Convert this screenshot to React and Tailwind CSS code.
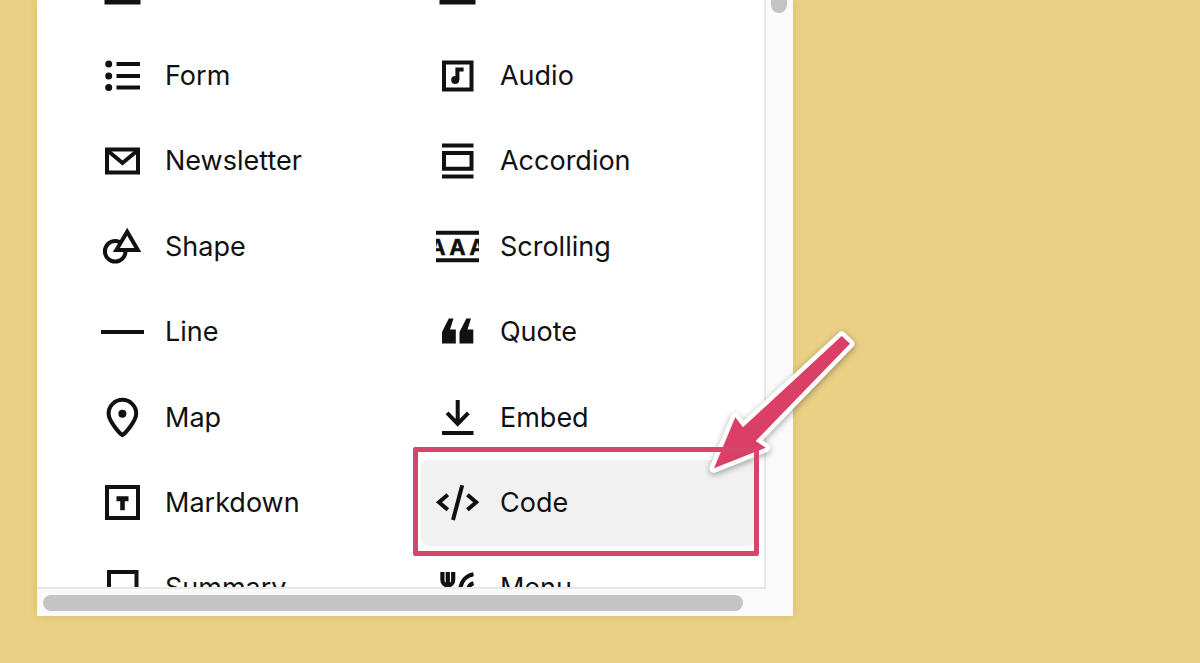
import clsx from "clsx";

const ICONS = {
  button: <path d="M7 10h31v23H7z" strokeWidth="5" />,
  video: <path d="M7 10h31v23H7z" strokeWidth="5" />,
  form: (
    <>
      <g fill="currentColor" stroke="none">
        <circle cx="8.7" cy="10" r="3.5" />
        <circle cx="8.7" cy="22" r="3.5" />
        <circle cx="8.7" cy="33.6" r="3.5" />
      </g>
      <path d="M16.5 10H40M16.5 22H40M16.5 33.6H40" />
    </>
  ),
  audio: (
    <>
      <path d="M9 8.5h27.5v27H9z" />
      <circle cx="20.2" cy="26" r="4" fill="currentColor" stroke="none" />
      <path d="M22.4 26V15.6h6.2" strokeWidth="4" />
    </>
  ),
  newsletter: (
    <>
      <path d="M7 10.5h31v23H7z" />
      <path d="M7.5 11.5L22.5 24L37.5 11.5" strokeWidth="4" />
    </>
  ),
  accordion: <path d="M7 6.5h31.5M7 37.5h31.5M9 14h27.5v15.8H9z" />,
  shape: (
    <>
      <circle cx="15.2" cy="26.3" r="10.3" />
      <path d="M27.2 6.8L37.8 25H16.4z" fill="white" />
    </>
  ),
  scrolling: (
    <>
      <path d="M1 7.7h43M1 35.2h43" />
      <svg x="1" y="10" width="43" height="22" viewBox="1 10 43 22">
        <g
          className="font-['Inter'] text-[22px] font-bold"
          fill="currentColor"
          stroke="currentColor"
          strokeWidth="0.4"
          textAnchor="middle"
        >
          <text x="2.5" y="29.5">A</text>
          <text x="22.5" y="29.5">A</text>
          <text x="42.5" y="29.5">A</text>
        </g>
      </svg>
    </>
  ),
  line: <path d="M1 22h43" />,
  quote: (
    <path
      d="M7 33.5V22L13.8 8.5H18.5L15 19.5H20.8V33.5zM24.5 33.5V22L31.3 8.5H36L32.5 19.5H38.3V33.5z"
      fill="currentColor"
      stroke="none"
    />
  ),
  map: (
    <>
      <path
        d="M22.4 39.2C20 37.5 8.6 25.5 8.6 17.6a13.8 13.8 0 0 1 27.6 0C36.2 25.5 24.8 37.5 22.4 39.2z"
        strokeLinejoin="round"
      />
      <circle cx="22.4" cy="17.8" r="4" fill="currentColor" stroke="none" />
    </>
  ),
  embed: <path d="M22.7 4v24M12.1 16.8L22.7 27.8L33.3 16.8M7 37h31.5" />,
  markdown: (
    <>
      <path d="M7 6h31v31H7z" />
      <path
        d="M16.5 15.2H28.5V20.2H24.8V29.2H20.2V20.2H16.5z"
        fill="currentColor"
        stroke="none"
      />
    </>
  ),
  code: <path d="M12.8 13.8L4 21.3L12.8 28.8M32.4 13.8L41.2 21.3L32.4 28.8M18 39L27.2 4.3" />,
  summary: <path d="M9 6h27.5v31H9z" />,
  menu: (
    <g strokeWidth="4.2">
      <path d="M7.4 6v8a5.4 5.4 0 0 0 10.8 0V6M12.8 6v30" />
      <path d="M25 24C26 15.5 31 9.5 38.5 8.2M32.6 24C33.5 20.5 35.5 18 38.5 17.2" />
    </g>
  ),
};

const BLOCKS = [
  ["button", "Button"],
  ["video", "Video"],
  ["form", "Form"],
  ["audio", "Audio"],
  ["newsletter", "Newsletter"],
  ["accordion", "Accordion"],
  ["shape", "Shape"],
  ["scrolling", "Scrolling"],
  ["line", "Line"],
  ["quote", "Quote"],
  ["map", "Map"],
  ["embed", "Embed"],
  ["markdown", "Markdown"],
  ["code", "Code"],
  ["summary", "Summary"],
  ["menu", "Menu"],
];

function BlockButton({ icon, label, active }) {
  return (
    <button
      type="button"
      className={clsx(
        "flex items-center gap-[21px] rounded-lg px-3.5 text-left text-[27px] leading-8",
        active && "bg-[#f1f1f1]"
      )}
    >
      <svg
        viewBox="0 0 44 44"
        className="size-11 shrink-0"
        fill="none"
        stroke="currentColor"
        strokeWidth="4"
        aria-hidden="true"
      >
        {ICONS[icon]}
      </svg>
      <span>{label}</span>
    </button>
  );
}

function Arrow() {
  return (
    <svg
      viewBox="0 0 160 160"
      className="absolute -right-[67px] bottom-[136px] size-40 drop-shadow-[0_2px_3px_rgba(0,0,0,0.35)]"
      aria-hidden="true"
    >
      <path
        d="M141.7 16L150 23.7L55.7 121L65.7 127.7L14 148.3L35.3 97.3L43 107.3z"
        fill="#da3f67"
        stroke="white"
        strokeWidth="9"
        strokeLinejoin="round"
        paintOrder="stroke"
      />
    </svg>
  );
}

export default function App() {
  return (
    <main className="flex h-screen flex-col overflow-hidden bg-[#e9d085] pb-[47px] pl-[37px] font-['Inter',sans-serif] text-[#111]">
      <section className="relative flex min-h-0 w-[65%] flex-1 flex-col bg-[#fafafa] shadow-[0_0_8px_rgba(120,90,0,0.15)]">
        <div className="flex min-h-0 flex-1">
          <div className="min-w-0 flex-1 overflow-hidden border-r-2 border-b-2 border-[#e8e8e8] bg-white pr-2 pl-[49px]">
            <div className="-mt-[52px] grid h-[683px] auto-rows-fr grid-cols-2">
              {BLOCKS.map(([icon, label]) => (
                <BlockButton
                  key={icon}
                  icon={icon}
                  label={label}
                  active={icon === "code"}
                />
              ))}
            </div>
          </div>
          <div className="flex w-[27px] justify-center">
            <div className="h-[13px] w-4 rounded-b-full bg-[#c4c4c4]" />
          </div>
        </div>
        <div className="flex h-[27px] items-center pr-[50px] pl-1.5">
          <div className="h-4 w-full rounded-full bg-[#c4c4c4]" />
        </div>
        <Arrow />
        <div className="pointer-events-none absolute right-[34px] bottom-[60px] left-[376px] h-[109px] rounded-xs border-5 border-[#d64469]" />
      </section>
    </main>
  );
}
